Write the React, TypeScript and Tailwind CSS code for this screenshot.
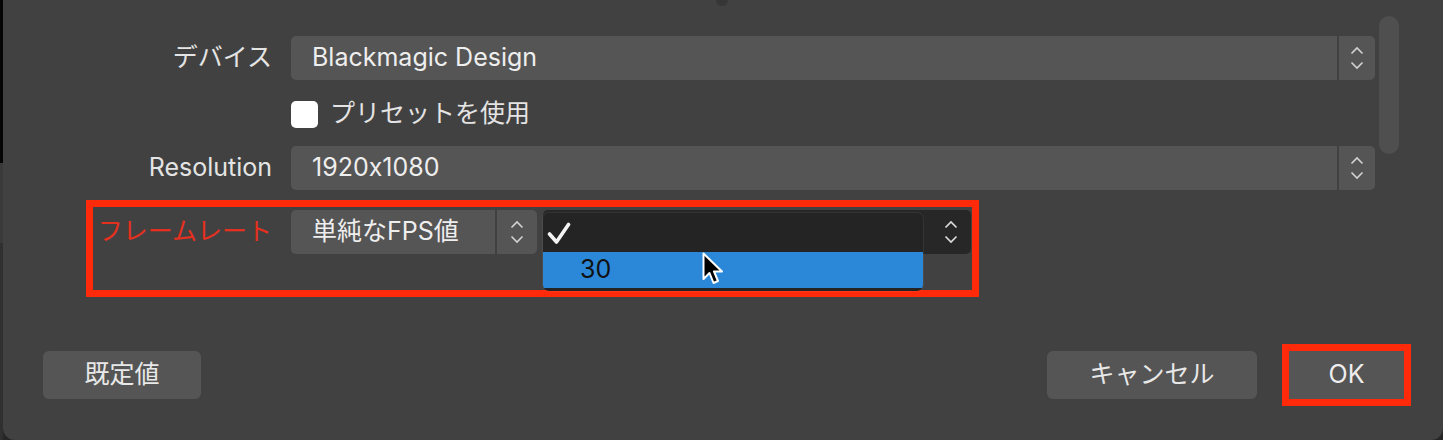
import React from "react";

const font = { fontFamily: '"Inter", "Noto Sans CJK JP", sans-serif' };

const Chevrons: React.FC<{ color?: string }> = ({ color = "#d2d2d2" }) => (
  <svg width="14" height="24" viewBox="0 0 14 24" fill="none">
    <path d="M1.5 7.5 L7 2 L12.5 7.5" stroke={color} strokeWidth="1.6" />
    <path d="M1.5 16.5 L7 22 L12.5 16.5" stroke={color} strokeWidth="1.6" />
  </svg>
);

const Select: React.FC<{ value: string; arrowW?: string; className?: string }> = ({
  value,
  arrowW = "w-[36px]",
  className = "",
}) => (
  <div className={`flex h-[44px] ${className}`}>
    <div className="flex-1 flex items-center pl-[21px] rounded-l-[5px] bg-[#555555] text-[#eeeeee] text-[25px]">
      {value}
    </div>
    <div className={`ml-[2px] ${arrowW} flex items-center justify-center rounded-r-[5px] bg-[#555555]`}>
      <Chevrons />
    </div>
  </div>
);

const Row: React.FC<{ label: string; children: React.ReactNode; className?: string }> = ({
  label,
  children,
  className = "",
}) => (
  <div className={`flex items-center h-[44px] ${className}`}>
    <div className="w-[269px] text-right text-[25px] text-[#e4e4e4]">{label}</div>
    <div className="ml-[19px] flex-1">{children}</div>
  </div>
);

const Cursor = () => (
  <svg width="24" height="36" viewBox="0 0 24 36" className="absolute left-[159px] top-[42px]">
    <path
      d="M1.5 1.5 L1.5 27 L7.5 21 L11.5 31 L16 29 L12 19.5 L20 19.5 Z"
      fill="#000"
      stroke="#fff"
      strokeWidth="2"
      strokeLinejoin="round"
    />
  </svg>
);

const Popup = () => (
  <div className="absolute left-0 top-[3px] w-[380px] h-[78px] rounded-[6px] bg-[#242424] overflow-hidden shadow-[0_0_0_1px_rgba(255,255,255,0.06)]">
    <div className="h-[39px] flex items-center pl-[4px]">
      <svg width="24" height="24" viewBox="0 0 24 24" fill="none">
        <path
          d="M2.5 13 L9.5 21 L21.5 3.5"
          stroke="#f4f4f4"
          strokeWidth="3.6"
          strokeLinecap="round"
          strokeLinejoin="round"
        />
      </svg>
    </div>
    <div className="h-[36px] bg-[#2b88d8] flex items-center pl-[37px] text-[25px] text-[#111111]">
      30
    </div>
  </div>
);

export default function App() {
  return (
    <div
      className="flex w-[1443px] h-[440px] bg-[#262626] overflow-hidden [font-feature-settings:'calt'_0]"
      style={font}
    >
      <div className="w-[3px] h-[440px] flex flex-col">
        <div className="h-[163px] bg-[#050505]" />
        <div className="h-[80px] bg-[#3a3a3a]" />
        <div className="flex-1 bg-[#303030]" />
      </div>

      <div className="relative w-[1440px] h-[440px] flex flex-col rounded-b-[12px] bg-[#414141]">
        <div className="absolute left-[713px] top-[-6px] w-[12px] h-[12px] rounded-full bg-[#363636]" />

        <div className="flex">
          <div className="w-[1372px] flex flex-col pt-[36px]">
            <Row label="デバイス">
              <Select value="Blackmagic Design" />
            </Row>

            <div className="mt-[20px] ml-[288px] flex items-center h-[28px]">
              <div className="w-[27px] h-[27px] rounded-[5px] bg-white" />
              <span className="ml-[12px] text-[25px] text-[#e4e4e4]">プリセットを使用</span>
            </div>

            <Row label="Resolution" className="mt-[18px]">
              <Select value="1920x1080" />
            </Row>

            <div className="mt-[10px] ml-[83px] w-[893px] h-[97px] border-[7px] border-[#ff2a0a] flex items-start pt-[3px]">
              <div className="w-[179px] h-[44px] flex items-center justify-end text-[25px] text-[#e5301f]">
                フレームレート
              </div>
              <Select value="単純なFPS値" arrowW="w-[40px]" className="ml-[19px] w-[246px]" />
              <div className="relative ml-[6px] w-[428px] h-[44px] rounded-[5px] bg-[#272727] flex items-center justify-end pr-[13px]">
                <Chevrons color="#dddddd" />
                <Popup />
                <Cursor />
              </div>
            </div>
          </div>
          <div className="ml-[4px] mt-[16px] w-[20px] h-[138px] rounded-full bg-[#4f4f4f]" />
        </div>

        <div className="mt-auto mb-[34px] h-[62px] flex items-center">
          <button className="ml-[40px] w-[158px] h-[48px] rounded-[6px] bg-[#555555] text-[25px] text-[#e8e8e8]">
            既定値
          </button>
          <button className="ml-auto w-[210px] h-[48px] rounded-[6px] bg-[#555555] text-[25px] text-[#e8e8e8]">
            キャンセル
          </button>
          <div className="ml-[25px] mr-[32px] w-[129px] h-[62px] border-[7px] border-[#ff2a0a] bg-[#555555] flex items-center justify-center text-[25px] text-[#eeeeee]">
            OK
          </div>
        </div>
      </div>
    </div>
  );
}
